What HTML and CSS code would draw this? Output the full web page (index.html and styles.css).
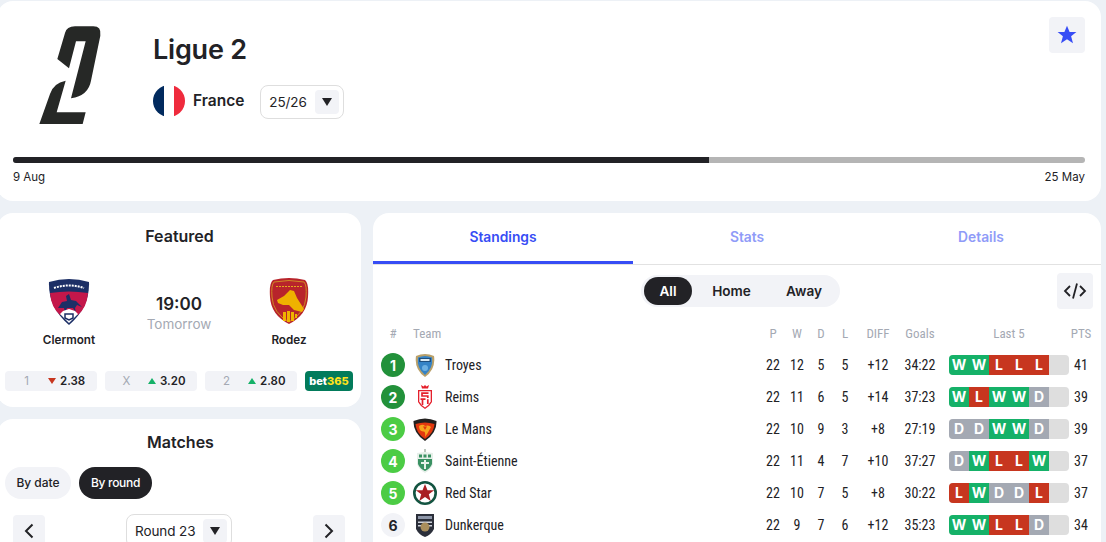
FILE: index.html
```html
<!DOCTYPE html>
<html lang="en">
<head>
<meta charset="utf-8">
<title>Ligue 2</title>
<link rel="stylesheet" href="styles.css">
</head>
<body>
<div class="page">
  <section class="card top">
    <div class="head">
      <div class="logo">
        <svg width="110" height="115" viewBox="0 0 330 345"><path fill="#262826" d="M112 120 135 42Q140 22 165 22H220Q245 22 241 50L213 185Q205 230 153 238L197 67H168L147 148ZM137 185Q100 192 90 225L58 315H188L197 280H110Z"/></svg>
      </div>
      <div class="info">
        <h1 class="title">Ligue 2</h1>
        <div class="meta">
          <span class="flag"></span>
          <span class="country">France</span>
          <div class="select season"><span class="select-text">25/26</span><span class="caret"><svg width="10" height="8" viewBox="0 0 10 8"><path d="M0 0H10L5 8Z"/></svg></span></div>
        </div>
      </div>
      <button class="square star"><svg width="20" height="20" viewBox="0 0 20 20"><path fill="#374df5" d="M10 0.8 12.600 7H19.400L14.100 11.200 16 18.200 10 14.300 4 18.200 5.900 11.200 0.600 7H7.400Z"/></svg></button>
    </div>
    <div class="progress"><div class="progress-fill"></div></div>
    <div class="dates"><span>9 Aug</span><span>25 May</span></div>
  </section>

  <div class="columns">
    <div class="side">
      <section class="card featured">
        <h2 class="card-title featured-title">Featured</h2>
        <div class="match">
          <div class="team">
            <svg width="48" height="48" viewBox="0 0 48 48"><path fill="#1c2f66" d="M4 5Q24-1 44 5 45 30 24 48 3 30 4 5Z"/><path fill="#c4174a" d="M5 16Q24 13 43 16 42 30 33 38L24 34 15 38Q6 30 5 16Z"/><path fill="#1c2f66" d="M13 31 17 25 22 24 21 19 24 17 26 23 31 24 37 30 32 28 30 31 31 36 28 31 22 31 20 36 19 31Z"/><path fill="#fff" d="M15 37 18 34 24 32 30 34 33 37 24 46Z"/><path fill="none" stroke="#1c2f66" stroke-width="1.500" d="M20 37H28V41L24 43 20 41Z"/><path fill="none" stroke="#fff" stroke-width="2" stroke-dasharray="2 1" d="M9 11Q24 6 39 11"/></svg>
            <span class="team-name">Clermont</span>
          </div>
          <div class="kick">
            <div class="time">19:00</div>
            <div class="day">Tomorrow</div>
          </div>
          <div class="team">
            <svg width="48" height="48" viewBox="0 0 48 48"><path fill="#b8242b" d="M8 3Q24-1 40 3 44 6 43 20 42 38 24 47 6 38 5 20 4 6 8 3Z"/><path fill="none" stroke="#d08a25" d="M9 5Q24 2 39 5 42 8 41 20 40 36 24 45 8 36 7 20 6 8 9 5Z"/><path fill="none" stroke="#e6a91c" stroke-dasharray="2 1" d="M11 9.500H37"/><path fill="#efb200" d="M12 23 19 19 25 13 29 14 32 21 39 32 37 35 29 33 24 28 18 28 13 26Z"/><path fill="#efb200" d="M18 35H21V44H18ZM22 34H25V45H22ZM26 35H29V44H26ZM30 37H32V41H30Z"/></svg>
            <span class="team-name">Rodez</span>
          </div>
        </div>
        <div class="odds">
          <div class="odd"><span class="odd-label">1</span><svg class="arrow" width="8" height="6" viewBox="0 0 8 6"><path fill="#c7361f" d="M0 0H8L4 6Z"/></svg><span class="odd-value">2.38</span></div>
          <div class="odd"><span class="odd-label">X</span><svg class="arrow" width="8" height="6" viewBox="0 0 8 6"><path fill="#15b168" d="M0 6H8L4 0Z"/></svg><span class="odd-value">3.20</span></div>
          <div class="odd"><span class="odd-label">2</span><svg class="arrow" width="8" height="6" viewBox="0 0 8 6"><path fill="#15b168" d="M0 6H8L4 0Z"/></svg><span class="odd-value">2.80</span></div>
          <div class="bet">bet<span class="bet-num">365</span></div>
        </div>
      </section>

      <section class="card matches">
        <h2 class="card-title">Matches</h2>
        <div class="filters">
          <span class="chip">By date</span>
          <span class="chip chip-on">By round</span>
        </div>
        <div class="round-nav">
          <button class="square nav"><svg width="12" height="16" viewBox="0 0 12 16"><path fill="none" stroke="#222226" stroke-width="2" d="M9.500 1.500 3 8 9.500 14.500"/></svg></button>
          <div class="select round"><span class="select-text">Round 23</span><span class="caret"><svg width="10" height="8" viewBox="0 0 10 8"><path d="M0 0H10L5 8Z"/></svg></span></div>
          <button class="square nav"><svg width="12" height="16" viewBox="0 0 12 16"><path fill="none" stroke="#222226" stroke-width="2" d="M2.500 1.500 9 8 2.500 14.500"/></svg></button>
        </div>
      </section>
    </div>

    <section class="card main">
      <nav class="tabs">
        <span class="tab tab-on">Standings</span>
        <span class="tab">Stats</span>
        <span class="tab">Details</span>
      </nav>
      <div class="controls">
        <div class="segment">
          <span class="seg seg-on">All</span>
          <span class="seg seg-home">Home</span>
          <span class="seg seg-away">Away</span>
        </div>
        <button class="square embed"><svg width="24" height="20" viewBox="0 0 24 20"><path fill="none" stroke="#222226" stroke-width="1.800" d="M7 5 2 10 7 15M17 5 22 10 17 15M14 2.500 10 17.500"/></svg></button>
      </div>
      <div class="table">
        <div class="row header">
          <span class="c hash">#</span><span class="l head-team">Team</span>
          <span class="c">P</span><span class="c">W</span><span class="c">D</span><span class="c">L</span><span class="c">DIFF</span><span class="c">Goals</span><span class="c last-head">Last 5</span><span class="c">PTS</span>
        </div>

        <div class="row">
          <span class="rank r1">1</span>
          <svg class="crest" viewBox="0 0 24 24"><path fill="#b9a06a" d="M3 3Q12-1 21 3 23 16 12 24 1 16 3 3Z"/><path fill="#3583c6" d="M5 4.500Q12 1.500 19 4.500 20.500 15 12 22 3.500 15 5 4.500Z"/><path fill="#1f4f7d" d="M6 5H18V9H6Z"/><path fill="#dcebf5" d="M7.500 6H16.500V8H7.500Z"/><circle cx="12" cy="15" r="3" fill="#6db0e2"/></svg>
          <span class="l">Troyes</span><span class="c">22</span><span class="c">12</span><span class="c">5</span><span class="c">5</span><span class="c">+12</span><span class="c">34:22</span>
          <div class="form"><i class="w">W</i><i class="w">W</i><i class="x">L</i><i class="x">L</i><i class="x">L</i></div><span class="c">41</span>
        </div>

        <div class="row">
          <span class="rank r1">2</span>
          <svg class="crest" viewBox="0 0 24 24"><path fill="#e5202c" d="M9 3.500 8 0 10.500 1.500 12 0 13.500 1.500 16 0 15 3.500Z"/><path fill="#e5202c" d="M5 5H19V17Q17 21 12 24 7 21 5 17Z"/><path fill="#fff" d="M6.300 6.300H17.700V16.500Q16 20 12 22.400 8 20 6.300 16.500Z"/><path fill="none" stroke="#e5202c" stroke-width="1.700" d="M15.500 8.200H9V11H14.800V13M7.500 14.200H12.500M9.500 14.200V20M14.800 14.200V19"/></svg>
          <span class="l">Reims</span><span class="c">22</span><span class="c">11</span><span class="c">6</span><span class="c">5</span><span class="c">+14</span><span class="c">37:23</span>
          <div class="form"><i class="w">W</i><i class="x">L</i><i class="w">W</i><i class="w">W</i><i class="d">D</i></div><span class="c">39</span>
        </div>

        <div class="row">
          <span class="rank r2">3</span>
          <svg class="crest" viewBox="0 0 24 24"><path fill="#23201f" d="M0.500 4Q12-1 23.500 4 24 16 12 24 0 16 0.500 4Z"/><path fill="#e2380f" d="M2.500 7Q12 4 21.500 7 21 16 12 22 3 16 2.500 7Z"/><path fill="#f7a51d" d="M6 9Q10 6.500 12 9 16 7.500 18 10 15 16 12 20 13 14 10 14.500 6 14 6 9Z"/><path fill="#e2380f" d="M10 9.500H14L12 13Z"/></svg>
          <span class="l">Le Mans</span><span class="c">22</span><span class="c">10</span><span class="c">9</span><span class="c">3</span><span class="c">+8</span><span class="c">27:19</span>
          <div class="form"><i class="d">D</i><i class="d">D</i><i class="w">W</i><i class="w">W</i><i class="d">D</i></div><span class="c">39</span>
        </div>

        <div class="row">
          <span class="rank r2">4</span>
          <svg class="crest" viewBox="0 0 24 24"><path fill="#e6efe9" d="M4 4 12 3 20 4V15Q18 21 12 24 6 21 4 15Z"/><path fill="#bcc8bf" d="M11 0H13V3H11Z"/><path fill="#3a9163" d="M5 10H19V15Q17 20 12 22 7 20 5 15Z"/><path fill="#3a9163" d="M6 5.500H9V8.500H6ZM10.500 5.500H13.500V8.500H10.500ZM15 5.500H18V8.500H15Z"/><path fill="#e6f1e9" d="M11 11H13V20H11ZM8 13H16V15H8Z"/></svg>
          <span class="l">Saint-Étienne</span><span class="c">22</span><span class="c">11</span><span class="c">4</span><span class="c">7</span><span class="c">+10</span><span class="c">37:27</span>
          <div class="form"><i class="d">D</i><i class="w">W</i><i class="x">L</i><i class="x">L</i><i class="w">W</i></div><span class="c">37</span>
        </div>

        <div class="row">
          <span class="rank r2">5</span>
          <svg class="crest" viewBox="0 0 24 24"><circle cx="12" cy="12" r="10.700" fill="#fff" stroke="#135441" stroke-width="2.600"/><path fill="#a91e22" d="M12 3 14.500 9.300H21.200L15.800 13.300 17.700 20 12 16.100 6.300 20 8.200 13.300 2.800 9.300H9.500Z"/></svg>
          <span class="l">Red Star</span><span class="c">22</span><span class="c">10</span><span class="c">7</span><span class="c">5</span><span class="c">+8</span><span class="c">30:22</span>
          <div class="form"><i class="x">L</i><i class="w">W</i><i class="d">D</i><i class="d">D</i><i class="x">L</i></div><span class="c">37</span>
        </div>

        <div class="row">
          <span class="rank r3">6</span>
          <svg class="crest" viewBox="0 0 24 24"><path fill="#2b2f3a" d="M3 1H21V16Q18 22 12 24 6 22 3 16Z"/><path fill="#8d96a8" d="M5 3H19V6H5Z"/><path fill="#cfd3dc" d="M5 8.500H19V10H5ZM5 12H19V13.500H5Z"/><circle cx="12" cy="14" r="4.500" fill="#a98e5c"/></svg>
          <span class="l">Dunkerque</span><span class="c">22</span><span class="c">9</span><span class="c">7</span><span class="c">6</span><span class="c">+12</span><span class="c">35:23</span>
          <div class="form"><i class="w">W</i><i class="w">W</i><i class="x">L</i><i class="x">L</i><i class="d">D</i></div><span class="c">34</span>
        </div>
      </div>
    </section>
  </div>
</div>
</body>
</html>
```

FILE: styles.css
```css
* { box-sizing: border-box; }
html, body { margin: 0; height: 100%; overflow: hidden; }
body { background: #edf1f6; color: #222226; font-family: Inter, "Liberation Sans", sans-serif; }
h1, h2 { margin: 0; }
button { border: 0; padding: 0; font: inherit; }

.page { width: 1104px; height: 542px; margin-left: -3px; padding-top: 1px; overflow: hidden; }
.card { background: #fff; border-radius: 16px; }

.top { height: 200px; padding: 0 16px; }
.head { display: flex; height: 156px; padding-top: 16px; }
.logo { width: 120px; height: 120px; padding: 2px 0 0 7px; }
.logo svg { display: block; }
.info { margin-left: 20px; padding-top: 15px; }
.title { font-size: 27px; line-height: 36px; font-weight: 600; letter-spacing: -0.2px; }
.meta { display: flex; align-items: center; margin-top: 15px; }
.flag { width: 32px; height: 32px; border-radius: 50%; background: linear-gradient(90deg, #012a5e 0 33%, #fff 33% 66%, #ef2b3d 66%); }
.country { margin: 0 0 1px 8px; font-size: 15.5px; font-weight: 600; }
.select { display: flex; align-items: center; justify-content: space-between; border: 1px solid #dedede; border-radius: 8px; background: #fff; }
.select-text { margin-bottom: 1px; font-size: 13.5px; letter-spacing: -0.1px; }
.season { width: 84px; height: 34px; margin: 2px 0 0 16px; padding: 0 4px 0 8px; }
.caret { display: flex; align-items: center; justify-content: center; width: 24px; height: 24px; border-radius: 4px; background: #f2f3f7; }
.caret svg path { fill: #222226; }
.square { display: flex; align-items: center; justify-content: center; width: 36px; height: 36px; border-radius: 4px; background: #f2f3f7; }
.star { margin-left: auto; }
.progress { height: 6px; border-radius: 3px; background: #b5b5b5; overflow: hidden; }
.progress-fill { width: 696px; height: 100%; background: #222226; }
.dates { display: flex; justify-content: space-between; margin-top: 6px; font-size: 11.5px; line-height: 16px; }

.columns { display: grid; grid-template-columns: 364px 728px; column-gap: 12px; margin-top: 12px; }
.side { display: flex; flex-direction: column; gap: 12px; }
.card-title { font-size: 16px; line-height: 24px; font-weight: 600; text-align: center; }
.featured-title { padding-left: 1px; }

.featured { height: 194px; padding: 11px 8px 0 8px; }
.match { display: grid; grid-template-columns: repeat(3, 110px); margin: 29px 0 0 9px; }
.team { display: flex; flex-direction: column; align-items: center; }
.team-name { margin-top: 7px; font-size: 11.7px; line-height: 16px; font-weight: 600; }
.kick { padding-top: 16px; text-align: center; }
.time { font-size: 17px; line-height: 22px; font-weight: 600; }
.day { font-size: 13.5px; line-height: 19px; color: #a4a9b3; }
.odds { display: flex; gap: 8px; margin-top: 23px; }
.odd { display: flex; align-items: center; width: 92px; height: 20px; border-radius: 4px; background: #f2f3f7; font-size: 11.5px; font-weight: 600; }
.odd-label { width: 43px; text-align: center; color: #a4a9b3; font-weight: 400; }
.odd-value { margin-left: 4px; }
.bet { width: 48px; height: 20px; border-radius: 4px; background: #027b5b; color: #fff; font-size: 11px; line-height: 20px; font-weight: 800; text-align: center; }
.bet-num { color: #ffe21c; }

.matches { height: 200px; padding: 11px 0 0 3px; }
.filters { display: flex; gap: 8px; margin: 13px 0 0 5px; }
.chip { display: flex; align-items: center; justify-content: center; width: 66px; height: 32px; padding-bottom: 2px; border-radius: 16px; background: #f2f3f7; font-size: 12px; font-weight: 500; }
.chip-on { width: 73px; background: #222226; color: #fff; letter-spacing: -0.3px; }
.round-nav { display: flex; align-items: flex-start; justify-content: space-between; margin-top: 15px; padding: 0 16px 0 13px; }
.nav { width: 32px; height: 32px; margin-top: 1px; }
.round { width: 106px; height: 34px; padding: 0 4px 0 8px; }

.main { height: 400px; }
.tabs { display: grid; grid-template-columns: 260px 228px 240px; height: 52px; border-bottom: 1px solid #e2e2e2; }
.tab { display: flex; align-items: center; justify-content: center; height: 51px; padding-bottom: 3px; font-size: 13.8px; font-weight: 600; color: #8f9bf8; }
.tab-on { color: #374df5; border-bottom: 3px solid #374df5; padding-bottom: 0; }
.controls { display: flex; padding: 8px 8px 0 268px; }
.segment { display: flex; align-items: center; width: 199px; height: 32px; margin-top: 2px; padding: 0 3px; border-radius: 16px; background: #f2f3f7; }
.seg { display: flex; align-items: center; justify-content: center; height: 28px; font-size: 13.6px; font-weight: 600; }
.seg-on { width: 48px; border-radius: 14px; background: #222226; color: #fff; }
.seg-home { width: 79px; }
.seg-away { width: 66px; }
.embed { margin-left: auto; }

.table { margin-top: 8px; padding: 0 8px; font-family: "Roboto Condensed", Roboto, sans-serif; font-stretch: 75%; font-size: 14px; }
.row { display: grid; grid-template-columns: 32px 32px 316px 24px 24px 24px 24px 42px 42px 128px 24px; align-items: center; height: 32px; }
.header { color: #a4a9b3; font-size: 13px; }
.hash { width: 24px; }
.head-team { grid-column: 2 / 4; }
.last-head { padding-left: 8px; }
.c { text-align: center; }
.l { text-align: left; }
.rank { display: flex; align-items: center; justify-content: center; width: 24px; height: 24px; border-radius: 50%; color: #fff; font-family: Inter, sans-serif; font-size: 14px; font-weight: 700; }
.r1 { background: #22913a; }
.r2 { background: #4ccc45; }
.r3 { background: #f2f3f7; color: #222226; }
.crest { display: block; width: 24px; height: 24px; }
.form { display: flex; width: 120px; height: 20px; justify-self: end; border-radius: 4px; background: #dedede; overflow: hidden; }
.form i { width: 20px; height: 20px; color: #fff; font-family: Inter, sans-serif; font-size: 14px; line-height: 20px; font-style: normal; font-weight: 700; text-align: center; }
.w { background: #15b168; }
.x { background: #c7361f; }
.d { background: #a4a9b3; }
```
